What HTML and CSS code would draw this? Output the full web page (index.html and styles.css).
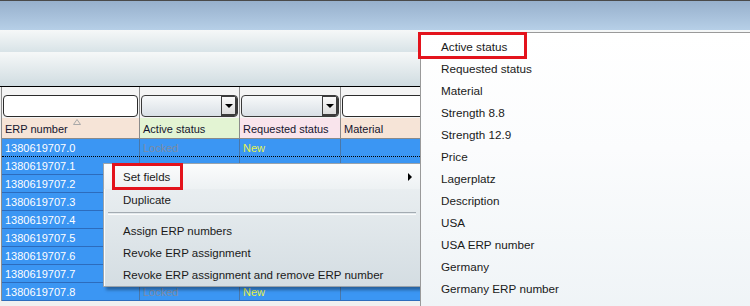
FILE: index.html
```html
<!DOCTYPE html>
<html lang="en">
<head>
  <meta charset="UTF-8">
  <title>ERP assignment</title>
  <link rel="stylesheet" href="styles.css">
</head>
<body>
  <div class="window">
    <div class="titlebar"></div>
    <div class="toolbar toolbar-top"></div>
    <div class="toolbar toolbar-main"></div>

    <div class="grid">
      <div class="grid-head">
        <div class="head-cell erp">
          <div class="filter"><span class="filter-input"></span></div>
          <div class="head-label">ERP number
            <svg class="sort-mark" width="8" height="6" viewBox="0 0 8 6"><polygon points="4,0.5 7.5,5.5 0.5,5.5" fill="none" stroke="#a8a8a8" stroke-width="1"/></svg>
          </div>
        </div>
        <div class="head-cell active">
          <div class="filter"><span class="filter-combo"><span class="combo-btn"></span></span></div>
          <div class="head-label">Active status</div>
        </div>
        <div class="head-cell requested">
          <div class="filter"><span class="filter-combo"><span class="combo-btn"></span></span></div>
          <div class="head-label">Requested status</div>
        </div>
        <div class="head-cell material">
          <div class="filter"><span class="filter-input"></span></div>
          <div class="head-label">Material</div>
        </div>
      </div>

      <!-- rows 1-7 sit under the context menu, their status cells are hidden -->
      <div class="grid-body">
        <div class="row focused"><span class="cell">1380619707.0</span><span class="cell locked">Locked</span><span class="cell new">New</span><span class="cell"></span></div>
        <div class="row"><span class="cell">1380619707.1</span><span class="cell"></span><span class="cell"></span><span class="cell"></span></div>
        <div class="row"><span class="cell">1380619707.2</span><span class="cell"></span><span class="cell"></span><span class="cell"></span></div>
        <div class="row"><span class="cell">1380619707.3</span><span class="cell"></span><span class="cell"></span><span class="cell"></span></div>
        <div class="row"><span class="cell">1380619707.4</span><span class="cell"></span><span class="cell"></span><span class="cell"></span></div>
        <div class="row"><span class="cell">1380619707.5</span><span class="cell"></span><span class="cell"></span><span class="cell"></span></div>
        <div class="row"><span class="cell">1380619707.6</span><span class="cell"></span><span class="cell"></span><span class="cell"></span></div>
        <div class="row"><span class="cell">1380619707.7</span><span class="cell"></span><span class="cell"></span><span class="cell"></span></div>
        <div class="row"><span class="cell">1380619707.8</span><span class="cell locked">Locked</span><span class="cell new">New</span><span class="cell"></span></div>
      </div>
    </div>

    <!-- context menu over the grid -->
    <div class="context-menu">
      <div class="menu-item hover">Set fields<span class="sub-arrow"></span></div>
      <div class="menu-item">Duplicate</div>
      <div class="menu-sep"></div>
      <div class="menu-item">Assign ERP numbers</div>
      <div class="menu-item">Revoke ERP assignment</div>
      <div class="menu-item">Revoke ERP assignment and remove ERP number</div>
    </div>

    <div class="submenu">
      <div class="menu-item">Active status</div>
      <div class="menu-item">Requested status</div>
      <div class="menu-item">Material</div>
      <div class="menu-item">Strength 8.8</div>
      <div class="menu-item">Strength 12.9</div>
      <div class="menu-item">Price</div>
      <div class="menu-item">Lagerplatz</div>
      <div class="menu-item">Description</div>
      <div class="menu-item">USA</div>
      <div class="menu-item">USA ERP number</div>
      <div class="menu-item">Germany</div>
      <div class="menu-item">Germany ERP number</div>
    </div>

    <!-- red highlight marks -->
    <div class="mark mark-set"></div>
    <div class="mark mark-active"></div>
  </div>
</body>
</html>
```

FILE: styles.css
```css
* {
  box-sizing: border-box;
}

body {
  margin: 0;
  background-color: #f0f0f0;
  font-family: "Liberation Sans", Arial, sans-serif;
}

.window {
  position: relative;
  width: 750px;
  height: 306px;
  overflow: hidden;
  background-color: #f0f0f0;
}

.titlebar {
  height: 30px;
  border-top: 1px solid #4a4a4a;
  background: linear-gradient(#97b0cc, #b6cfe7);
}

.toolbar-top {
  height: 22px;
  background: linear-gradient(#f6f8f8, #d8e3e7);
}

.toolbar-main {
  height: 35px;
  border-bottom: 1px solid #000;
  background: linear-gradient(#f6f8f8, #d0dce1);
}

.grid {
  margin-left: 1px;
  border-left: 1px solid #8c8c8c;
  font-size: 11px;
}

.grid-head,
.row {
  display: grid;
  grid-template-columns: 138px 100px 101px 1fr;
}

.head-cell {
  border-right: 1px solid #8a8a8a;
}

.filter {
  height: 31px;
  padding: 8px 1px 1px 1px;
  background-color: #f4f4f4;
}

.filter-input {
  display: block;
  height: 22px;
  border: 1px solid #2c2c2c;
  border-radius: 4px;
  background-color: #fff;
}

.filter-combo {
  display: flex;
  justify-content: flex-end;
  height: 22px;
  border: 1px solid #3a3a3a;
  border-radius: 4px;
  background: linear-gradient(#f7f9fa, #d9e0e6);
  overflow: hidden;
}

.combo-btn {
  position: relative;
  width: 16px;
  border: 1px solid #3c3c3c;
  border-width: 1px 2px 2px 1px;
  background: linear-gradient(#fafafa, #dcdcdc);
}

.combo-btn::after {
  content: "";
  position: absolute;
  left: 3px;
  top: 7px;
  border-left: 4px solid transparent;
  border-right: 4px solid transparent;
  border-top: 4px solid #000;
}

.head-label {
  position: relative;
  height: 21px;
  padding: 5px 3px 0;
  border-bottom: 1px solid #8a8a8a;
  color: #14142e;
}

.sort-mark {
  position: absolute;
  left: 71px;
  top: 1px;
}

.erp .head-label,
.material .head-label {
  background-color: #f6e4d7;
}

.active .head-label {
  background-color: #e3f4d3;
}

.requested .head-label {
  background-color: #f9e4ec;
}

.row {
  height: 18px;
  background-color: #3b96f3;
  border-bottom: 1px solid #2d6cbc;
  color: #fff;
  line-height: 15px;
}

.row.focused {
  border-bottom: 1px dotted #000;
}

.cell {
  padding: 2px 0 0 3px;
  border-right: 1px solid #4a77a8;
  white-space: nowrap;
  overflow: hidden;
}

.cell.locked {
  color: #7d8ca3;
}

.cell.new {
  color: #e8f24c;
}

.context-menu {
  position: absolute;
  left: 103px;
  top: 163px;
  width: 318px;
  height: 124px;
  padding: 1px 0;
  border: 1px solid #9aa3ab;
  background: linear-gradient(#eef2f4, #d4dde2);
  box-shadow: inset 1px 1px 0 #fbfcfc, 3px 3px 3px rgba(0, 0, 0, 0.35);
  font-size: 11.5px;
  color: #1a1a1a;
}

.menu-item {
  position: relative;
  height: 22px;
  padding-left: 19px;
  line-height: 22px;
  white-space: nowrap;
}

.menu-item.hover {
  height: 24px;
  line-height: 24px;
  background: linear-gradient(#fbfcfc, #edf1f3);
}

.sub-arrow {
  position: absolute;
  right: 8px;
  top: 8px;
  border-top: 4px solid transparent;
  border-bottom: 4px solid transparent;
  border-left: 4px solid #000;
}

.menu-sep {
  margin: 1px 4px 5px;
  height: 3px;
  border-top: 1px solid #a3abb2;
  border-bottom: 1px solid #fafbfc;
}

.submenu {
  position: absolute;
  left: 420px;
  top: 32px;
  width: 340px;
  height: 290px;
  padding-top: 3px;
  border-top: 1px solid #9a9a9a;
  border-left: 1px solid #9a9a9a;
  background: linear-gradient(#ffffff, #fbfcfd 40%, #eef3f6);
  font-size: 11.7px;
  color: #1a1a1a;
}

.submenu .menu-item {
  padding-left: 20px;
}

.mark {
  position: absolute;
  border: 3px solid #e3131c;
}

.mark-set {
  left: 112px;
  top: 163px;
  width: 71px;
  height: 27px;
}

.mark-active {
  left: 418px;
  top: 32px;
  width: 109px;
  height: 27px;
}
```
